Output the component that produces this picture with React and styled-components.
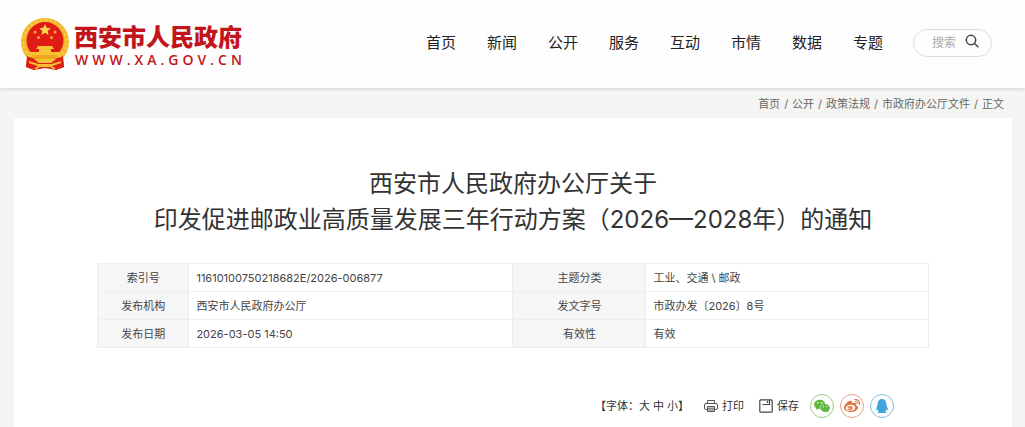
import React from 'react'
import styled, { createGlobalStyle } from 'styled-components'
import { AiFillWechat } from 'react-icons/ai'
import { FaWeibo, FaQq } from 'react-icons/fa'

const navItems = ['首页', '新闻', '公开', '服务', '互动', '市情', '数据', '专题'];
const crumbs = ['首页', '公开', '政策法规', '市政府办公厅文件', '正文'];
const rows = [
    ['索引号', '11610100750218682E/2026-006877', '主题分类', '工业、交通 \\ 邮政'],
    ['发布机构', '西安市人民政府办公厅', '发文字号', '市政办发〔2026〕8号'],
    ['发布日期', '2026-03-05 14:50', '有效性', '有效'],
];

const Emblem = () => (
    <EmblemSvg viewBox="0 0 50 54" aria-hidden="true">
        <path d="M8 36L6 50l8 3 11-2 11 2 8-3-2-14z" fill="#d81e16" />
        <circle cx="25" cy="25" r="24" fill="#f3b62c" />
        <circle cx="25" cy="25" r="21.500" fill="none" stroke="#f7c944" strokeWidth="2.500" strokeDasharray="3 2" />
        <circle cx="25" cy="23.500" r="18.500" fill="#e01b15" />
        <path d="M25 7l1.700 3.800 4.100.4-3.100 2.700.9 4-3.600-2.100-3.600 2.100.9-4-3.100-2.700 4.100-.4z" fill="#fbd64b" />
        <g fill="#f9a83e">
            <circle cx="15" cy="15" r="1.500" />
            <circle cx="35" cy="15" r="1.500" />
            <circle cx="18.500" cy="20.500" r="1.500" />
            <circle cx="31.500" cy="20.500" r="1.500" />
        </g>
        <path d="M18 29h14l2 3h-3v3h11l-1 4H9l-1-4h11v-3h-3z" fill="#f7c234" />
        <path d="M12 38h26l-3 4H15z" fill="#f2a61f" />
        <path d="M7 39c6 3 9 2 12 5 2 2 10 2 12 0 3-3 6-2 12-5l1 11-9 3-5-4H20l-5 4-9-3z" fill="#df2018" />
        <path d="M14 42h22l-5 4H19z" fill="#f8c433" />
        <path d="M9 45l9 3h14l9-3M15 52l5-3h10l5 3" fill="none" stroke="#f6bd32" strokeWidth="2" />
    </EmblemSvg>
)

const SearchIcon = () => (
    <svg width="14" height="14" viewBox="0 0 14 14" fill="none" stroke="#444" strokeWidth="1.500" strokeLinecap="round" aria-hidden="true">
        <circle cx="6" cy="6" r="4.700" />
        <path d="M9.500 9.500l3.500 3.200" />
    </svg>
)

const PrintIcon = () => (
    <svg width="14" height="14" viewBox="0 0 14 14" fill="none" stroke="#555" aria-hidden="true">
        <path d="M3.500 4.500V1.500h7v3" />
        <rect x=".5" y="4.500" width="13" height="6" rx="1.500" />
        <path d="M3.500 7.500h7v5h-7zM4 9.200h6M4 11h6" fill="#fff" />
    </svg>
)

const SaveIcon = () => (
    <svg width="14" height="14" viewBox="0 0 14 14" fill="none" stroke="#444" strokeWidth="1.200" aria-hidden="true">
        <rect x=".8" y=".8" width="12.400" height="12.400" rx="1" />
        <path d="M3.500 5.500h7V1M8.500 2v2" />
    </svg>
)

const App = () => {
    return (
        <Page>
            <GlobalStyle />
            <Header>
                <Logo href="#">
                    <Emblem />
                    <LogoText>
                        <LogoName>西安市人民政府</LogoName>
                        <LogoUrl>WWW.XA.GOV.CN</LogoUrl>
                    </LogoText>
                </Logo>
                <Nav>
                    {navItems.map((item) => <NavLink href="#" key={item}>{item}</NavLink>)}
                </Nav>
                <Search>
                    <SearchInput type="text" placeholder="搜索" aria-label="搜索" />
                    <SearchButton type="submit" aria-label="搜索"><SearchIcon /></SearchButton>
                </Search>
            </Header>
            <Breadcrumb>
                {crumbs.map((item, i) => (
                    <React.Fragment key={item}>
                        {i > 0 && <span>/</span>}
                        <CrumbLink href="#">{item}</CrumbLink>
                    </React.Fragment>
                ))}
            </Breadcrumb>
            <Article>
                <Title>西安市人民政府办公厅关于<br />印发促进邮政业高质量发展三年行动方案（2026—2028年）的通知</Title>
                <InfoTable>
                    <colgroup>
                        <Col $width="11%" />
                        <Col $width="39%" />
                        <Col $width="16%" />
                        <Col $width="34%" />
                    </colgroup>
                    <tbody>
                        {rows.map(([labelA, valueA, labelB, valueB]) => (
                            <tr key={labelA}>
                                <Label scope="row">{labelA}</Label>
                                <Value>{valueA}</Value>
                                <Label scope="row">{labelB}</Label>
                                <Value>{valueB}</Value>
                            </tr>
                        ))}
                    </tbody>
                </InfoTable>
                <Tools>
                    <FontSizes>
                        <span>【字体：</span>
                        <Sizes>
                            <ToolButton type="button">大</ToolButton>
                            <ToolButton type="button">中</ToolButton>
                            <ToolButton type="button">小</ToolButton>
                        </Sizes>
                        <span>】</span>
                    </FontSizes>
                    <ToolButton type="button"><PrintIcon />打印</ToolButton>
                    <ToolButton type="button"><SaveIcon />保存</ToolButton>
                    <Share>
                        <ShareLink href="#" aria-label="微信" $color="#5db83c" $border="#9ccb8a"><AiFillWechat size={18} /></ShareLink>
                        <ShareLink href="#" aria-label="微博" $color="#e2703f" $border="#e3a287"><FaWeibo size={16} /></ShareLink>
                        <ShareLink href="#" aria-label="QQ" $color="#3fa5dc" $border="#84bddb"><FaQq size={14} /></ShareLink>
                    </Share>
                </Tools>
            </Article>
        </Page>
    )
}

const GlobalStyle = createGlobalStyle`
    * {
        box-sizing: border-box;
    }
    body {
        margin: 0;
        background: #f5f6f3;
        color: #444;
        font-family: Inter, "Noto Sans CJK SC", sans-serif;
        font-size: 11px;
    }
    a {
        color: inherit;
        text-decoration: none;
    }
    button, input {
        font: inherit;
        color: inherit;
        border: 0;
        padding: 0;
        background: none;
    }
    button {
        cursor: pointer;
    }
`

const Page = styled.div`
    display: flex;
    flex-direction: column;
    min-height: 100vh;
`

const Header = styled.header`
    display: flex;
    align-items: center;
    height: 88px;
    padding: 0 33px 3px 20px;
    background: #fefefe;
    box-shadow: 0 1px 4px rgba(0, 0, 0, 0.15);
`

const Logo = styled.a`
    display: flex;
    align-items: center;
    gap: 4px;
    padding-top: 3px;
    color: #c2151b;
`

const EmblemSvg = styled.svg`
    width: 50px;
    height: 54px;
`

const LogoText = styled.div`
    display: flex;
    flex-direction: column;
`

const LogoName = styled.strong`
    font-family: "Noto Sans CJK SC", sans-serif;
    font-size: 24px;
    font-weight: 900;
    line-height: 32px;
`

const LogoUrl = styled.span`
    padding-left: 1px;
    font-family: "Open Sans", sans-serif;
    font-size: 14px;
    font-weight: 600;
    line-height: 16px;
    letter-spacing: 4px;
`

const Nav = styled.nav`
    display: flex;
    gap: 31px;
    margin-left: auto;
    color: #222;
    font-size: 15px;
    line-height: 24px;
`

const NavLink = styled.a`
    white-space: nowrap;
`

const Search = styled.form`
    display: flex;
    align-items: center;
    width: 79px;
    height: 28px;
    margin-left: 30px;
    padding: 0 12px 0 18px;
    border: 1px solid #ddd;
    border-radius: 14px;
`

const SearchInput = styled.input`
    flex: 1;
    min-width: 0;
    font-size: 12px;
    outline: none;
    &::placeholder {
        color: #aaa;
    }
`

const SearchButton = styled.button`
    display: flex;
    padding-bottom: 4px;
`

const Breadcrumb = styled.nav`
    display: flex;
    justify-content: flex-end;
    gap: 4px;
    padding: 8px 21px 6px;
    color: #666;
    line-height: 16px;
`

const CrumbLink = styled.a`
    white-space: nowrap;
`

const Article = styled.main`
    flex: 1;
    margin: 0 13px 0 14px;
    padding: 48px 83px 6px;
    background: #fff;
`

const Title = styled.h1`
    margin: 0 0 25px;
    color: #333;
    font-size: 24px;
    font-weight: 400;
    line-height: 36px;
    text-align: center;
`

const InfoTable = styled.table`
    width: 100%;
    table-layout: fixed;
    border-collapse: collapse;
    line-height: 16px;
`

const Col = styled.col`
    width: ${(props) => props.$width};
`

const Label = styled.th`
    height: 28px;
    padding: 0;
    border: 1px solid #eee;
    background: #f6f6f6;
    font-weight: 400;
`

const Value = styled.td`
    padding: 0 7px;
    border: 1px solid #eee;
`

const Tools = styled.div`
    display: flex;
    align-items: center;
    justify-content: flex-end;
    gap: 15px;
    margin-top: 46px;
    padding-right: 35px;
    line-height: 16px;
`

const FontSizes = styled.div`
    display: flex;
    color: #333;
`

const Sizes = styled.div`
    display: flex;
    gap: 3px;
`

const ToolButton = styled.button`
    display: flex;
    align-items: center;
    gap: 4px;
    color: #333;
`

const Share = styled.div`
    display: flex;
    gap: 6px;
    margin-left: -4px;
`

const ShareLink = styled.a`
    display: flex;
    align-items: center;
    justify-content: center;
    width: 24px;
    height: 24px;
    border: 1px solid ${(props) => props.$border};
    border-radius: 50%;
    color: ${(props) => props.$color};
`

export default App
